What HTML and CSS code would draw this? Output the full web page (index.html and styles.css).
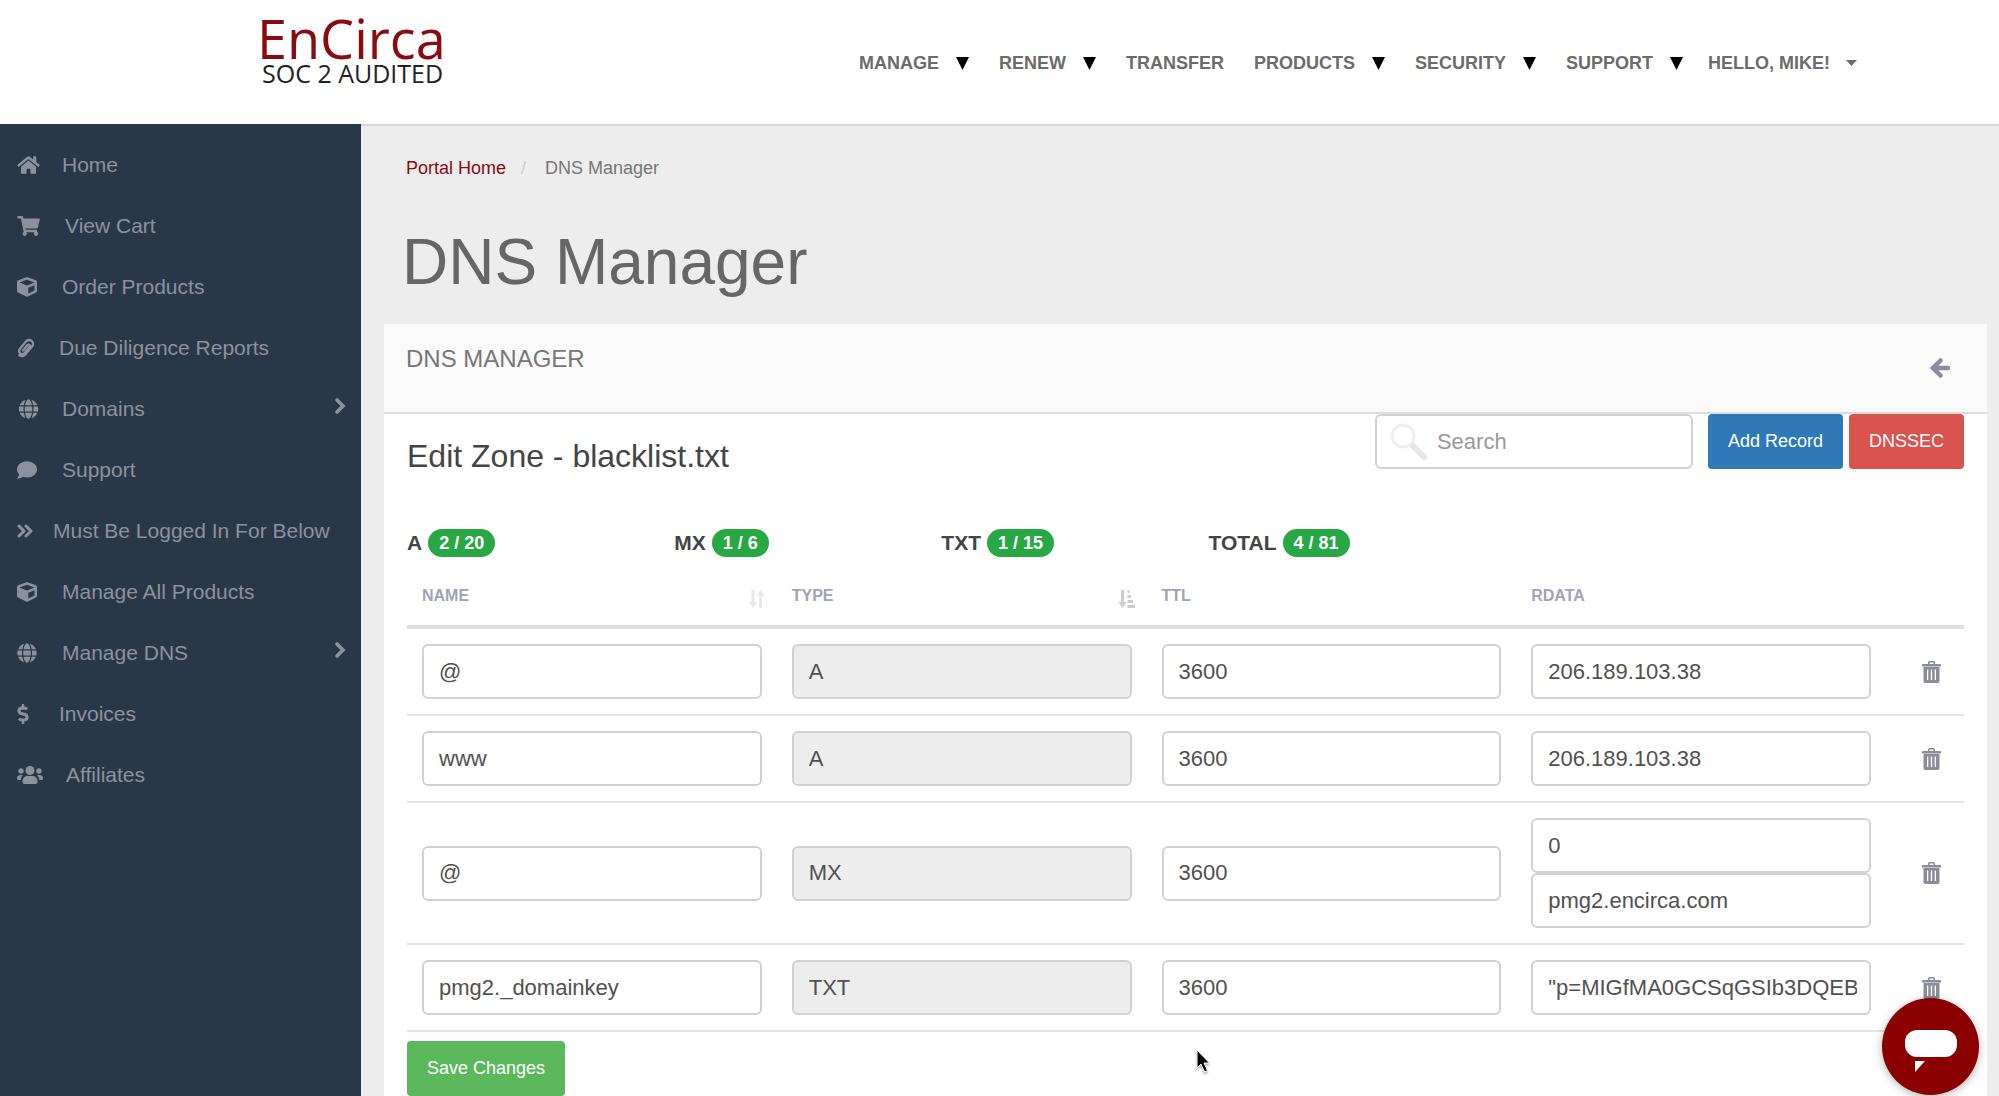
FILE: index.html
```html
<!DOCTYPE html>
<html lang="en">
<head>
  <meta charset="UTF-8">
  <meta name="viewport" content="width=device-width, initial-scale=1.0">
  <title>DNS Manager - EnCirca</title>
  <link rel="stylesheet" href="styles.css">
</head>
<body>

  <!-- shared icons -->
  <svg class="sprite" aria-hidden="true">
    <symbol id="i-home" viewBox="0 0 576 512"><path d="M280.37 148.26L96 300.11V464a16 16 0 0 0 16 16l112.06-.29a16 16 0 0 0 15.92-16V368a16 16 0 0 1 16-16h64a16 16 0 0 1 16 16v95.64a16 16 0 0 0 16 16.05L464 480a16 16 0 0 0 16-16V300L295.67 148.26a12.19 12.19 0 0 0-15.3 0zM571.6 251.47L488 182.56V44.05a12 12 0 0 0-12-12h-56a12 12 0 0 0-12 12v72.61L318.47 43a48 48 0 0 0-61 0L4.34 251.47a12 12 0 0 0-1.6 16.9l25.5 31A12 12 0 0 0 45.15 301l235.22-193.74a12.19 12.19 0 0 1 15.3 0L530.9 301a12 12 0 0 0 16.9-1.6l25.5-31a12 12 0 0 0-1.7-16.93z"/></symbol>
    <symbol id="i-cart" viewBox="0 0 576 512"><path d="M528.12 301.319l47.273-208C578.806 78.301 567.391 64 551.99 64H159.208l-9.166-44.81C147.758 8.021 137.93 0 126.529 0H24C10.745 0 0 10.745 0 24v16c0 13.255 10.745 24 24 24h69.883l70.248 343.435C147.325 417.1 136 435.222 136 456c0 30.928 25.072 56 56 56s56-25.072 56-56c0-15.674-6.447-29.835-16.824-40h209.647C430.447 426.165 424 440.326 424 456c0 30.928 25.072 56 56 56s56-25.072 56-56c0-22.172-12.888-41.332-31.579-50.405l5.517-24.276c3.413-15.018-8.002-29.319-23.403-29.319H218.117l-6.545-32h293.145c11.206 0 20.92-7.754 23.403-18.681z"/></symbol>
    <symbol id="i-cube" viewBox="0 0 512 512"><path d="M239.1 6.3l-208 78c-18.7 7-31.1 25-31.1 45v225.1c0 18.2 10.3 34.8 26.5 42.9l208 104c13.5 6.8 29.4 6.8 42.9 0l208-104c16.3-8.1 26.5-24.8 26.5-42.9V129.3c0-20-12.4-37.9-31.1-44.9l-208-78C262 2.2 250 2.2 239.1 6.3zM256 68.4l192 72v1.1l-192 78-192-78v-1.1l192-72zm32 356V275.5l160-65v133.9l-160 80z"/></symbol>
    <symbol id="i-clip" viewBox="0 0 17 20"><path d="M6 12.500 10.500 7a1.300 1.300 0 0 1 2 1.800L7.600 15a3 3 0 0 1-4.400.2 3.200 3.200 0 0 1-.2-4.400L9 3.400a4 4 0 0 1 5.700-.4 4 4 0 0 1 .3 5.600L8 16.700a4 4 0 0 1-5.700.4" fill="none" stroke="currentColor" stroke-width="2.300" stroke-linecap="round"/></symbol>
    <symbol id="i-globe" viewBox="0 0 496 512"><path d="M336.5 160C322 70.7 287.8 8 248 8s-74 62.7-88.5 152h177zM152 256c0 22.2 1.2 43.5 3.3 64h185.3c2.1-20.5 3.3-41.8 3.3-64s-1.2-43.5-3.3-64H155.3c-2.1 20.5-3.3 41.8-3.3 64zm324.7-96c-28.6-67.9-86.5-120.4-158-141.6 24.4 33.8 41.2 84.7 50 141.6h108zM177.2 18.4C105.8 39.6 47.8 92.1 19.3 160h108c8.7-56.9 25.5-107.8 49.9-141.6zM487.4 192H372.7c2.1 21 3.3 42.5 3.3 64s-1.2 43-3.3 64h114.6c5.5-20.5 8.6-41.8 8.6-64s-3.1-43.5-8.5-64zM120 256c0-21.5 1.2-43 3.3-64H8.6C3.2 212.5 0 233.8 0 256s3.2 43.5 8.6 64h114.6c-2-21-3.2-42.5-3.2-64zm39.5 96c14.5 89.3 48.7 152 88.5 152s74-62.7 88.5-152h-177zm159.3 141.6c71.4-21.2 129.4-73.7 158-141.6h-108c-8.8 56.9-25.6 107.8-50 141.6zM19.3 352c28.6 67.9 86.5 120.4 158 141.6-24.4-33.8-41.2-84.7-50-141.6h-108z"/></symbol>
    <symbol id="i-comment" viewBox="0 0 512 512"><path d="M256 32C114.6 32 0 125.1 0 240c0 49.6 21.4 95 57 130.7C44.5 421.1 2.7 466 2.2 466.5c-2.2 2.3-2.8 5.7-1.5 8.7S4.8 480 8 480c66.3 0 116-31.8 140.6-51.4 32.7 12.3 69 19.4 107.4 19.4 141.4 0 256-93.1 256-208S397.4 32 256 32z"/></symbol>
    <symbol id="i-double" viewBox="0 0 16 20"><path d="M2 5l5 5-5 5M9 5l5 5-5 5" fill="none" stroke="currentColor" stroke-width="3" stroke-linecap="round" stroke-linejoin="round"/></symbol>
    <symbol id="i-dollar" viewBox="0 0 288 512"><path d="M209.2 233.4l-108-31.6C88.7 198.2 80 186.5 80 173.5c0-16.3 13.2-29.5 29.5-29.5h66.3c12.2 0 24.2 3.7 34.2 10.5 6.1 4.1 14.3 3.1 19.5-2l34.8-34c7.1-6.9 6.1-18.4-1.8-24.5C238 74.8 207.4 64.1 176 64V16c0-8.8-7.2-16-16-16h-32c-8.8 0-16 7.2-16 16v48h-2.5C45.8 64-5.4 118.7.5 183.6c4.2 46.1 39.4 83.6 83.8 96.6l102.5 30c12.5 3.7 21.2 15.3 21.2 28.3 0 16.3-13.2 29.5-29.5 29.5h-66.3C100 368 88 364.3 78 357.5c-6.1-4.1-14.3-3.1-19.5 2l-34.8 34c-7.1 6.9-6.1 18.4 1.8 24.5 24.5 19.2 55.1 29.9 86.5 30v48c0 8.8 7.2 16 16 16h32c8.8 0 16-7.2 16-16v-48.2c46.6-.9 90.3-28.6 105.7-72.7 21.5-61.6-14.6-124.8-72.5-141.7z"/></symbol>
    <symbol id="i-users" viewBox="0 0 26 20"><circle cx="13" cy="5.500" r="4.500"/><circle cx="4" cy="6" r="2.700"/><circle cx="22" cy="6" r="2.700"/><path d="M5.500 17v-1a5 5 0 0 1 5-5h5a5 5 0 0 1 5 5v1a2 2 0 0 1-2 2h-11a2 2 0 0 1-2-2zM0 13.500a3.500 3.500 0 0 1 3.500-3.500h2.300A7 7 0 0 0 3.700 15H1.300A1.300 1.300 0 0 1 0 13.700zM26 13.500a3.500 3.500 0 0 0-3.500-3.500h-2.300a7 7 0 0 1 2.100 5h2.400a1.300 1.300 0 0 0 1.300-1.300z"/></symbol>
    <symbol id="i-next" viewBox="0 0 12 18"><path d="M3 3l6 6-6 6" fill="none" stroke="currentColor" stroke-width="3.600" stroke-linecap="round"/></symbol>
    <symbol id="i-down" viewBox="0 0 13 14"><path d="M0 1h13L6.500 14z"/></symbol>
    <symbol id="i-trash" viewBox="0 0 19 22"><path d="M6 3V1.500A1.500 1.500 0 0 1 7.500 0h4A1.500 1.500 0 0 1 13 1.500V3h5a1 1 0 0 1 1 1v1.500H0V4a1 1 0 0 1 1-1zm1.500 0h4V1.500h-4zM1.500 6h16v14a2 2 0 0 1-2 2h-12a2 2 0 0 1-2-2zm3.500 2.500v10.500h1.300V8.500zm3.800 0v10.500h1.400V8.500zm3.900 0v10.500H14V8.500z" fill-rule="evenodd"/></symbol>
  </svg>

  <header class="header">
    <a class="logo" href="#">
      <span class="logo-name">EnCirca</span>
      <span class="logo-sub">SOC 2 AUDITED</span>
    </a>
    <nav class="nav">
      <a href="#">MANAGE <svg class="arrow"><use href="#i-down"/></svg></a>
      <a href="#">RENEW <svg class="arrow"><use href="#i-down"/></svg></a>
      <a href="#">TRANSFER</a>
      <a href="#">PRODUCTS <svg class="arrow"><use href="#i-down"/></svg></a>
      <a href="#">SECURITY <svg class="arrow"><use href="#i-down"/></svg></a>
      <a href="#">SUPPORT <svg class="arrow"><use href="#i-down"/></svg></a>
    </nav>
    <a class="user" href="#">HELLO, MIKE! <svg class="caret" viewBox="0 0 11 6"><path d="M0 0h11L5.500 6z"/></svg></a>
  </header>

  <div class="layout">
    <nav class="sidebar">
      <a href="#"><svg class="icon wide fw"><use href="#i-home"/></svg>Home</a>
      <a href="#"><svg class="icon wide"><use href="#i-cart"/></svg>View Cart</a>
      <a href="#"><svg class="icon"><use href="#i-cube"/></svg>Order Products</a>
      <a href="#"><svg class="icon narrow"><use href="#i-clip"/></svg>Due Diligence Reports</a>
      <a href="#"><svg class="icon wide fw"><use href="#i-globe"/></svg>Domains<svg class="next"><use href="#i-next"/></svg></a>
      <a href="#"><svg class="icon"><use href="#i-comment"/></svg>Support</a>
      <a href="#"><svg class="icon double"><use href="#i-double"/></svg>Must Be Logged In For Below</a>
      <a href="#"><svg class="icon"><use href="#i-cube"/></svg>Manage All Products</a>
      <a href="#"><svg class="icon"><use href="#i-globe"/></svg>Manage DNS<svg class="next"><use href="#i-next"/></svg></a>
      <a href="#"><svg class="icon dollar"><use href="#i-dollar"/></svg>Invoices</a>
      <a href="#"><svg class="icon users"><use href="#i-users"/></svg>Affiliates</a>
    </nav>

    <main class="main">
      <div class="breadcrumb">
        <a href="#">Portal Home</a>
        <span class="slash">/</span>
        <span>DNS Manager</span>
      </div>
      <h1>DNS Manager</h1>

      <section class="panel">
        <div class="panel-head">
          <h2>DNS MANAGER</h2>
          <a class="back" href="#" aria-label="Back">
            <svg viewBox="0 0 20 20"><path d="M10.500 2.500L3 10l7.500 7.500M4 10h14" fill="none" stroke="currentColor" stroke-width="4.500" stroke-linecap="round"/></svg>
          </a>
        </div>

        <div class="panel-body">
          <div class="toolbar">
            <h3>Edit Zone - blacklist.txt</h3>
            <div class="search">
              <svg viewBox="0 0 38 38"><circle cx="13" cy="13" r="11" fill="none" stroke="#eef1f0" stroke-width="3"/><path d="M23 23l11 11" stroke="#e6e6e6" stroke-width="6" stroke-linecap="round"/></svg>
              <input type="text" placeholder="Search" aria-label="Search">
            </div>
            <div class="actions">
              <button class="btn btn-blue" type="button">Add Record</button>
              <button class="btn btn-red" type="button">DNSSEC</button>
            </div>
          </div>

          <div class="counts">
            <div>A <span class="badge">2 / 20</span></div>
            <div>MX <span class="badge">1 / 6</span></div>
            <div>TXT <span class="badge">1 / 15</span></div>
            <div>TOTAL <span class="badge">4 / 81</span></div>
          </div>

          <table class="records">
            <thead>
              <tr>
                <th><div class="sort">NAME
                  <svg viewBox="0 0 17 18"><path d="M3.500 0h3v12H9l-4 6-4-6h2.500zM11 18h3V6h2.500l-4-6-4 6H11z"/></svg>
                </div></th>
                <th><div class="sort active">TYPE
                  <svg viewBox="0 0 17 18"><path d="M3 0h3v12h2.500l-4 6-4-6H3zM9.500 0h2v3h-2zM9.500 5h3.500v3H9.500zM9.500 10H15v3H9.500zM9.500 15H17v3H9.500z"/></svg>
                </div></th>
                <th>TTL</th>
                <th>RDATA</th>
                <th class="del"></th>
              </tr>
            </thead>
            <tbody>
              <tr>
                <td><input type="text" value="@" aria-label="Name"></td>
                <td><input type="text" value="A" aria-label="Type" readonly></td>
                <td><input type="text" value="3600" aria-label="TTL"></td>
                <td><input type="text" value="206.189.103.38" aria-label="Rdata"></td>
                <td class="del"><button type="button" aria-label="Delete"><svg><use href="#i-trash"/></svg></button></td>
              </tr>
              <tr>
                <td><input type="text" value="www" aria-label="Name"></td>
                <td><input type="text" value="A" aria-label="Type" readonly></td>
                <td><input type="text" value="3600" aria-label="TTL"></td>
                <td><input type="text" value="206.189.103.38" aria-label="Rdata"></td>
                <td class="del"><button type="button" aria-label="Delete"><svg><use href="#i-trash"/></svg></button></td>
              </tr>
              <tr>
                <td><input type="text" value="@" aria-label="Name"></td>
                <td><input type="text" value="MX" aria-label="Type" readonly></td>
                <td><input type="text" value="3600" aria-label="TTL"></td>
                <td>
                  <input type="text" value="0" aria-label="Priority">
                  <input type="text" value="pmg2.encirca.com" aria-label="Rdata">
                </td>
                <td class="del"><button type="button" aria-label="Delete"><svg><use href="#i-trash"/></svg></button></td>
              </tr>
              <tr>
                <td><input type="text" value="pmg2._domainkey" aria-label="Name"></td>
                <td><input type="text" value="TXT" aria-label="Type" readonly></td>
                <td><input type="text" value="3600" aria-label="TTL"></td>
                <td><input type="text" value="&quot;p=MIGfMA0GCSqGSIb3DQEB" aria-label="Rdata"></td>
                <td class="del"><button type="button" aria-label="Delete"><svg><use href="#i-trash"/></svg></button></td>
              </tr>
            </tbody>
          </table>

          <button class="btn btn-green" type="submit">Save Changes</button>
        </div>
      </section>
    </main>
  </div>

  <button class="chat" type="button" aria-label="Chat">
    <svg viewBox="0 0 52 44"><rect width="52" height="27" rx="12"/><path d="M10 31h10L10 42z"/></svg>
  </button>

  <svg class="cursor" viewBox="0 0 14 24" aria-hidden="true"><path d="M1 1v18l4-4 3.500 8 3-1.300L8 14h5.500z" fill="#000" stroke="#fff"/></svg>

</body>
</html>
```
FILE: styles.css
```css
* {
  box-sizing: border-box;
}

body {
  margin: 0;
  font-family: "Liberation Sans", Arial, sans-serif;
  font-size: 18px;
  color: #444;
  background-color: #fff;
}

a {
  text-decoration: none;
}

svg {
  display: block;
  fill: currentColor;
}

.sprite {
  position: absolute;
  width: 0;
  height: 0;
}

/* header */
.header {
  display: flex;
  align-items: center;
  height: 124px;
  padding: 2px 142px 0 257px;
}

.logo {
  display: flex;
  flex-direction: column;
  align-self: flex-start;
  padding-top: 9px;
  font-family: "Open Sans", "Noto Sans", sans-serif;
}

.logo-name {
  font-size: 54px;
  font-weight: 500;
  line-height: 54px;
  color: #8b0a10;
}

.logo-sub {
  padding-left: 5px;
  font-size: 25px;
  line-height: 16px;
  color: #222;
}

.nav {
  display: flex;
  gap: 30px;
  margin-left: auto;
}

.nav a, .user {
  display: flex;
  align-items: center;
  gap: 17px;
  font-weight: bold;
  color: #6b6b6b;
}

.user {
  gap: 16px;
  margin-left: 25px;
}

.arrow {
  width: 13px;
  height: 14px;
  color: #000;
}

.caret {
  width: 11px;
  height: 6px;
}

/* sidebar */
.layout {
  display: flex;
  min-height: calc(100vh - 125px);
}

.sidebar {
  flex: none;
  width: 361px;
  padding: 10px 15px 0 17px;
  background-color: #283849;
}

.sidebar a {
  display: flex;
  align-items: center;
  height: 61px;
  font-size: 21px;
  color: #8b929f;
}

.icon {
  width: 20px;
  height: 20px;
  margin-right: 25px;
}

.wide {
  width: 23px;
}

.fw {
  margin-right: 22px;
}

.narrow {
  width: 17px;
}

.double {
  width: 16px;
  margin-right: 20px;
}

.dollar {
  width: 12px;
  margin-right: 30px;
}

.users {
  width: 26px;
  margin-right: 23px;
}

.next {
  width: 12px;
  height: 18px;
  margin: 0 0 5px auto;
}

/* content */
.main {
  flex: 1;
  min-width: 0;
  padding: 30px 12px 0 23px;
  background-color: #ededed;
  border-top: 2px solid #d6d6d6;
}

.breadcrumb {
  display: flex;
  gap: 15px;
  padding-left: 22px;
  line-height: 24px;
  color: #777;
}

.breadcrumb a {
  color: #8b0a10;
}

.slash {
  padding-right: 4px;
  color: #ccc;
}

h1 {
  margin: 47px 0 27px;
  padding-left: 18px;
  font-size: 64px;
  font-weight: normal;
  line-height: 70px;
  color: #666;
}

.panel {
  background-color: #fff;
}

.panel-head {
  display: flex;
  justify-content: space-between;
  align-items: center;
  height: 90px;
  padding: 0 37px 0 22px;
  background-color: #fafafa;
  border-bottom: 2px solid #ddd;
}

.panel-head h2 {
  align-self: flex-start;
  margin: 20px 0 0;
  font-size: 24px;
  font-weight: normal;
  line-height: 30px;
  color: #777;
}

.back {
  color: #8a8c98;
}

.back svg {
  width: 20px;
  height: 20px;
}

.panel-body {
  padding: 0 23px;
}

.toolbar {
  display: flex;
  align-items: flex-start;
}

.toolbar h3 {
  margin: 22px auto 0 0;
  font-size: 32px;
  font-weight: normal;
  line-height: 40px;
  color: #444;
}

.search {
  position: relative;
  width: 318px;
  margin-right: 15px;
}

.search svg {
  position: absolute;
  top: 9px;
  left: 15px;
  width: 38px;
  height: 38px;
}

.search input {
  padding-left: 60px;
}

input {
  display: block;
  width: 100%;
  height: 55px;
  padding: 0 12px 0 15px;
  font-family: inherit;
  font-size: 22px;
  color: #505050;
  background-color: #fff;
  border: 2px solid #d2d2d2;
  border-radius: 6px;
}

input::placeholder {
  color: #999;
}

input[readonly] {
  background-color: #ededed;
}

.actions {
  display: flex;
  gap: 6px;
}

.btn {
  height: 55px;
  padding: 0 20px;
  font-family: inherit;
  font-size: 18px;
  color: #fff;
  border: none;
  border-radius: 4px;
  cursor: pointer;
}

.btn-blue {
  background-color: #3079b8;
}

.btn-red {
  background-color: #d9534f;
}

.btn-green {
  display: block;
  margin-top: 9px;
  background-color: #5cb85c;
}

.counts {
  display: grid;
  grid-template-columns: repeat(6, 1fr);
  margin: 53px -23px 0;
}

.counts div {
  display: flex;
  gap: 6px;
  padding-left: 23px;
  font-size: 21px;
  font-weight: bold;
  line-height: 28px;
}

.badge {
  padding: 0 11px;
  font-size: 18px;
  color: #fff;
  background-color: #28a745;
  border-radius: 14px;
}

.records {
  width: 100%;
  margin-top: 15px;
  table-layout: fixed;
  border-spacing: 0;
}

.records th {
  padding: 12px 15px 17px;
  font-size: 16px;
  line-height: 24px;
  text-align: left;
  color: #a0a3b0;
  border-bottom: 4px solid #ddd;
}

.sort {
  display: flex;
  justify-content: space-between;
}

.sort svg {
  width: 17px;
  height: 18px;
  margin: 6px -3px 0 0;
  fill: #e8e8eb;
}

.active svg {
  fill: #cbccd2;
}

.records td {
  padding: 15px;
  border-bottom: 2px solid #e4e4e4;
}

.records .del {
  width: 78px;
  padding-right: 23px;
}

.del button {
  display: block;
  margin-left: auto;
  padding: 0;
  color: #8a8c98;
  background: none;
  border: none;
  cursor: pointer;
}

.del svg {
  width: 19px;
  height: 22px;
}

/* chat button */
.chat {
  position: fixed;
  right: 20px;
  bottom: 1px;
  display: flex;
  justify-content: center;
  width: 97px;
  height: 97px;
  padding: 32px 0 0;
  color: #fff;
  background-color: #8b0000;
  border: none;
  border-radius: 50%;
  box-shadow: 0 2px 8px rgba(0, 0, 0, 0.3);
  cursor: pointer;
}

.chat svg {
  width: 52px;
  height: 44px;
}

.cursor {
  position: absolute;
  top: 1049px;
  left: 1196px;
  width: 14px;
  height: 24px;
  filter: drop-shadow(0 2px 1px rgba(0, 0, 0, 0.3));
}
```
